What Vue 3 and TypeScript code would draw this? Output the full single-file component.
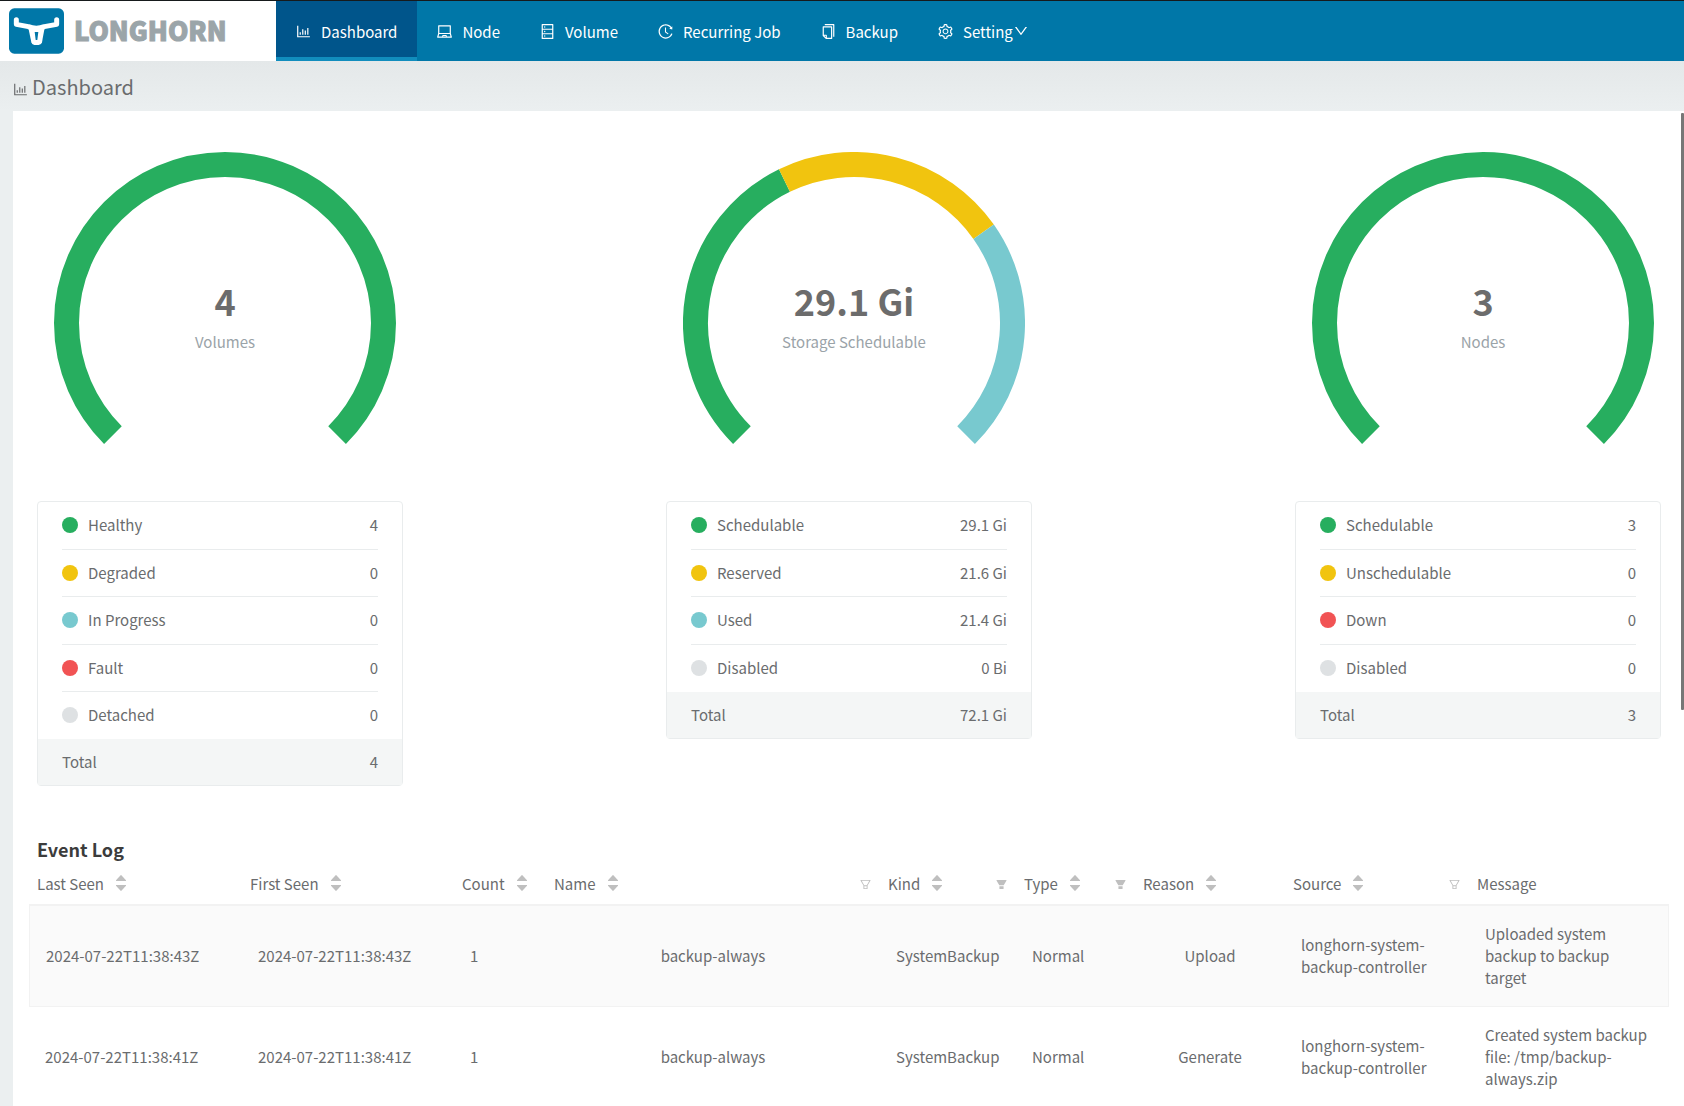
<script setup lang="ts">
interface Slice {
  label: string
  color: string
  value: number
  text: string
}
interface Summary {
  name: string
  headline: string
  total: string
  slices: Slice[]
}
interface Column {
  title: string
  width: number
  sortable: boolean
  filter?: 'outlined' | 'filled'
}

const GREEN = '#27ae5f'
const YELLOW = '#f1c40f'
const TEAL = '#78c9cf'
const RED = '#f15354'
const GREY = '#dee1e3'

const icons = {
  chart:
    'M888 792H200V168c0-4.4-3.6-8-8-8h-56c-4.4 0-8 3.6-8 8v688c0 4.4 3.6 8 8 8h752c4.4 0 8-3.6 8-8v-56c0-4.4-3.6-8-8-8zm-600-80h56c4.4 0 8-3.6 8-8V560c0-4.4-3.6-8-8-8h-56c-4.4 0-8 3.6-8 8v144c0 4.4 3.6 8 8 8zm152 0h56c4.4 0 8-3.6 8-8V384c0-4.4-3.6-8-8-8h-56c-4.4 0-8 3.6-8 8v320c0 4.4 3.6 8 8 8zm152 0h56c4.4 0 8-3.6 8-8V462c0-4.4-3.6-8-8-8h-56c-4.4 0-8 3.6-8 8v242c0 4.4 3.6 8 8 8zm152 0h56c4.4 0 8-3.6 8-8V304c0-4.4-3.6-8-8-8h-56c-4.4 0-8 3.6-8 8v400c0 4.4 3.6 8 8 8z',
  laptop:
    'M956.9 845.1L896.4 632V168c0-17.7-14.3-32-32-32h-704c-17.7 0-32 14.3-32 32v464L67.9 845.1C60.4 866 75.8 888 98 888h828.8c22.2 0 37.6-22 30.1-42.9zM200.4 208h624v395h-624V208zm228.3 608l8.1-37h150.3l8.1 37H428.7zm224 0l-19.1-86.7c-.8-3.7-4.1-6.3-7.8-6.3H398.2c-3.8 0-7 2.6-7.8 6.3L371.3 816H151l42.3-149h638.2l42.3 149H652.7z',
  database:
    'M832 64H192c-17.7 0-32 14.3-32 32v832c0 17.7 14.3 32 32 32h640c17.7 0 32-14.3 32-32V96c0-17.7-14.3-32-32-32zm-600 72h560v208H232V136zm560 480H232V408h560v208zm0 272H232V680h560v208zM304 240a40 40 0 1 0 80 0 40 40 0 1 0-80 0zm0 272a40 40 0 1 0 80 0 40 40 0 1 0-80 0zm0 272a40 40 0 1 0 80 0 40 40 0 1 0-80 0z',
  history:
    'M536.1 273H488c-4.4 0-8 3.6-8 8v275.3c0 2.6 1.2 5 3.3 6.5l165.3 120.7c3.6 2.6 8.6 1.9 11.2-1.7l28.6-39c2.7-3.7 1.9-8.7-1.7-11.2L544.1 528.5V281c0-4.4-3.6-8-8-8zm219.8 75.2l156.8 38.3c5 1.2 9.9-2.6 9.9-7.7l.8-161.5c0-6.7-7.7-10.5-12.9-6.3L752.9 334.1a8 8 0 0 0 3 14.1zm167.7 301.1l-56.7-19.5a8 8 0 0 0-10.1 4.8c-1.9 5.1-3.9 10.1-6 15.1-17.8 42.1-43.3 80-75.9 112.5a353 353 0 0 1-112.5 75.9 352.18 352.18 0 0 1-137.7 27.8c-47.8 0-94.1-9.3-137.7-27.8a353 353 0 0 1-112.5-75.9c-32.5-32.5-58-70.4-75.9-112.5A353.44 353.44 0 0 1 171 512c0-47.8 9.3-94.2 27.8-137.8 17.8-42.1 43.3-80 75.9-112.5a353 353 0 0 1 112.5-75.9C430.6 167.3 477 158 524.8 158s94.1 9.3 137.7 27.8A353 353 0 0 1 775 261.7c10.2 10.3 19.8 21 28.6 32.3l59.8-46.8C784.7 146.6 662.2 81.9 524.6 82 285 82.1 92.6 276.7 95 516.4 97.4 751.9 288.9 942 524.8 942c185.5 0 343.5-117.6 403.7-282.3 1.5-4.2-.7-8.9-4.9-10.4z',
  copy:
    'M832 64H296c-4.4 0-8 3.6-8 8v56c0 4.4 3.6 8 8 8h496v688c0 4.4 3.6 8 8 8h56c4.4 0 8-3.6 8-8V96c0-17.7-14.3-32-32-32zM704 192H192c-17.7 0-32 14.3-32 32v530.7c0 8.5 3.4 16.6 9.4 22.6l173.3 173.3c2.2 2.2 4.7 4 7.4 5.5v1.9h4.2c3.5 1.3 7.2 2 11 2H704c17.7 0 32-14.3 32-32V224c0-17.7-14.3-32-32-32zM350 856.2L263.9 770H350v86.2zM664 888H414V746c0-22.1-17.9-40-40-40H232V264h432v624z',
  setting:
    'M924.8 625.7l-65.5-56c3.1-19 4.7-38.4 4.7-57.8s-1.6-38.8-4.7-57.8l65.5-56a32.03 32.03 0 0 0 9.3-35.2l-.9-2.6a443.74 443.74 0 0 0-79.7-137.9l-1.8-2.1a32.12 32.12 0 0 0-35.1-9.5l-81.3 28.9c-30-24.6-63.5-44-99.7-57.6l-15.7-85a32.05 32.05 0 0 0-25.8-25.7l-2.7-.5c-52.1-9.4-106.9-9.4-159 0l-2.7.5a32.05 32.05 0 0 0-25.8 25.7l-15.8 85.4a351.86 351.86 0 0 0-99 57.4l-81.9-29.1a32 32 0 0 0-35.1 9.5l-1.8 2.1a446.02 446.02 0 0 0-79.7 137.9l-.9 2.6c-4.5 12.5-.8 26.5 9.3 35.2l66.3 56.6c-3.1 18.8-4.6 38-4.6 57.1 0 19.2 1.5 38.4 4.6 57.1L99 625.5a32.03 32.03 0 0 0-9.3 35.2l.9 2.6c18.1 50.4 44.9 96.9 79.7 137.9l1.8 2.1a32.12 32.12 0 0 0 35.1 9.5l81.9-29.1c29.8 24.5 63.1 43.9 99 57.4l15.8 85.4a32.05 32.05 0 0 0 25.8 25.7l2.7.5a449.4 449.4 0 0 0 159 0l2.7-.5a32.05 32.05 0 0 0 25.8-25.7l15.7-85a350 350 0 0 0 99.7-57.6l81.3 28.9a32 32 0 0 0 35.1-9.5l1.8-2.1c34.8-41.1 61.6-87.5 79.7-137.9l.9-2.6c4.5-12.3.8-26.3-9.3-35zM788.3 465.9c2.5 15.1 3.8 30.6 3.8 46.1s-1.3 31-3.8 46.1l-6.6 40.1 74.7 63.9a370.03 370.03 0 0 1-42.6 73.6L721 702.8l-31.4 25.8c-23.9 19.6-50.5 35-79.3 45.8l-38.1 14.3-17.9 97a377.5 377.5 0 0 1-85 0l-17.9-97.2-37.8-14.5c-28.5-10.8-55-26.2-78.7-45.7l-31.4-25.9-93.4 33.2c-17-22.9-31.2-47.6-42.6-73.6l75.5-64.5-6.5-40c-2.4-14.9-3.7-30.3-3.7-45.5 0-15.3 1.2-30.6 3.7-45.5l6.5-40-75.5-64.5c11.3-26.1 25.6-50.7 42.6-73.6l93.4 33.2 31.4-25.9c23.7-19.5 50.2-34.9 78.7-45.7l37.9-14.3 17.9-97.2c28.1-3.2 56.8-3.2 85 0l17.9 97 38.1 14.3c28.7 10.8 55.4 26.2 79.3 45.8l31.4 25.8 92.8-32.9c17 22.9 31.2 47.6 42.6 73.6L781.8 426l6.5 39.9zM512 326c-97.2 0-176 78.8-176 176s78.8 176 176 176 176-78.8 176-176-78.8-176-176-176zm79.2 255.2A111.6 111.6 0 0 1 512 614c-29.9 0-58-11.7-79.2-32.8A111.6 111.6 0 0 1 400 502c0-29.9 11.7-58 32.8-79.2C454 401.6 482.1 390 512 390c29.9 0 58 11.6 79.2 32.8A111.6 111.6 0 0 1 624 502c0 29.9-11.7 58-32.8 79.2z',
  down:
    'M884 256h-75c-5.1 0-9.9 2.5-12.9 6.6L512 654.2 227.9 262.6c-3-4.1-7.8-6.6-12.9-6.6h-75c-6.5 0-10.3 7.4-6.5 12.7l352.6 486.1c12.8 17.6 39 17.6 51.7 0l352.6-486.1c3.9-5.3.1-12.7-6.4-12.7z',
}

const filterPaths = {
  outlined:
    'M880.1 154H143.9c-24.5 0-39.8 26.7-27.5 48L349 597.4V838c0 17.7 14.2 32 31.8 32h262.4c17.6 0 31.8-14.3 31.8-32V597.4L907.7 202c12.2-21.3-3.1-48-27.6-48zM603.4 798H420.6V642h182.9v156zm9.6-236.6l-9.5 16.6h-183l-9.5-16.6L212.7 226h598.6L613 561.4z',
  filled:
    'M349 838c0 17.7 14.2 32 31.8 32h262.4c17.6 0 31.8-14.3 31.8-32V642H349v196zm531.1-684H143.9c-24.5 0-39.8 26.7-27.5 48l221.3 376h348.8l221.3-376c12.1-21.3-3.2-48-27.7-48z',
}

const nav = [
  { label: 'Dashboard', icon: icons.chart, active: true },
  { label: 'Node', icon: icons.laptop },
  { label: 'Volume', icon: icons.database },
  { label: 'Recurring Job', icon: icons.history },
  { label: 'Backup', icon: icons.copy },
  { label: 'Setting', icon: icons.setting, menu: true },
]

const summaries: Summary[] = [
  {
    name: 'Volumes',
    headline: '4',
    total: '4',
    slices: [
      { label: 'Healthy', color: GREEN, value: 4, text: '4' },
      { label: 'Degraded', color: YELLOW, value: 0, text: '0' },
      { label: 'In Progress', color: TEAL, value: 0, text: '0' },
      { label: 'Fault', color: RED, value: 0, text: '0' },
      { label: 'Detached', color: GREY, value: 0, text: '0' },
    ],
  },
  {
    name: 'Storage Schedulable',
    headline: '29.1 Gi',
    total: '72.1 Gi',
    slices: [
      { label: 'Schedulable', color: GREEN, value: 29.1, text: '29.1 Gi' },
      { label: 'Reserved', color: YELLOW, value: 21.6, text: '21.6 Gi' },
      { label: 'Used', color: TEAL, value: 21.4, text: '21.4 Gi' },
      { label: 'Disabled', color: GREY, value: 0, text: '0 Bi' },
    ],
  },
  {
    name: 'Nodes',
    headline: '3',
    total: '3',
    slices: [
      { label: 'Schedulable', color: GREEN, value: 3, text: '3' },
      { label: 'Unschedulable', color: YELLOW, value: 0, text: '0' },
      { label: 'Down', color: RED, value: 0, text: '0' },
      { label: 'Disabled', color: GREY, value: 0, text: '0' },
    ],
  },
]

const columns: Column[] = [
  { title: 'Last Seen', width: 213, sortable: true },
  { title: 'First Seen', width: 212, sortable: true },
  { title: 'Count', width: 92, sortable: true },
  { title: 'Name', width: 334, sortable: true, filter: 'outlined' },
  { title: 'Kind', width: 136, sortable: true, filter: 'filled' },
  { title: 'Type', width: 119, sortable: true, filter: 'filled' },
  { title: 'Reason', width: 150, sortable: true },
  { title: 'Source', width: 184, sortable: true, filter: 'outlined' },
  { title: 'Message', width: 200, sortable: false },
]
const tableWidth = columns.reduce((sum, c) => sum + c.width, 0)

const events = [
  {
    time: '2024-07-22T11:38:43Z',
    reason: 'Upload',
    message: 'Uploaded system backup to backup target',
  },
  {
    time: '2024-07-22T11:38:41Z',
    reason: 'Generate',
    message: 'Created system backup file: /tmp/backup-always.zip',
  },
]

/** Converts the slices to arcs of a 270 degree ring, starting at the lower left. */
function arcs(slices: Slice[]) {
  const radius = 158.5
  const sum = slices.reduce((total, s) => total + s.value, 0)
  const point = (turn: number) => {
    const angle = ((turn * 270 - 225) * Math.PI) / 180
    return `${(171 + radius * Math.cos(angle)).toFixed(2)} ${(171 + radius * Math.sin(angle)).toFixed(2)}`
  }
  let from = 0
  return slices
    .filter((s) => s.value > 0)
    .map((s) => {
      const to = from + s.value / sum
      const large = (to - from) * 270 > 180 ? 1 : 0
      const d = `M${point(from)} A${radius} ${radius} 0 ${large} 1 ${point(to)}`
      from = to
      return { d, color: s.color }
    })
}
</script>

<template>
  <div class="app">
    <header class="topbar">
      <a class="brand" href="#" aria-label="Longhorn home">
        <svg class="brand-mark" viewBox="0 0 165 136" aria-hidden="true">
          <rect width="165" height="136" rx="16" fill="#0077a8" />
          <path
            d="M22 34V48L58 55Q70 60 82 60Q94 60 106 55L143 48V34"
            fill="none"
            stroke="#fff"
            stroke-width="15"
            stroke-linecap="round"
            stroke-linejoin="round"
          />
          <path d="M58 58H107L99 102Q97 110 89 110H76Q69 110 67 102Z" fill="#fff" />
          <path d="M77 71H88L85 95H80Z" fill="#0077a8" />
        </svg>
        <span class="brand-name">LONGHORN</span>
      </a>
      <nav class="nav">
        <a v-for="item in nav" :key="item.label" href="#" class="nav-item" :class="{ active: item.active }">
          <svg class="icon" viewBox="0 0 1024 1024" aria-hidden="true"><path :d="item.icon" /></svg>
          <span class="nav-label">{{ item.label }}</span>
          <svg v-if="item.menu" class="caret" viewBox="0 0 1024 1024" aria-hidden="true"><path :d="icons.down" /></svg>
        </a>
      </nav>
    </header>

    <div class="page-title">
      <svg class="icon" viewBox="0 0 1024 1024" aria-hidden="true"><path :d="icons.chart" /></svg>
      <h1>Dashboard</h1>
    </div>

    <main class="content">
      <div class="scroll-thumb"></div>
      <section class="summaries">
        <article v-for="s in summaries" :key="s.name" class="summary">
          <div class="gauge">
            <svg class="ring" viewBox="0 0 342 342" aria-hidden="true">
              <path v-for="a in arcs(s.slices)" :key="a.color" :d="a.d" :stroke="a.color" fill="none" stroke-width="25" />
            </svg>
            <div class="gauge-text">
              <strong>{{ s.headline }}</strong>
              <span>{{ s.name }}</span>
            </div>
          </div>
          <div class="legend">
            <ul>
              <li v-for="slice in s.slices" :key="slice.label">
                <i class="dot" :style="{ background: slice.color }"></i>
                <span class="name">{{ slice.label }}</span>
                <span>{{ slice.text }}</span>
              </li>
            </ul>
            <div class="total"><span>Total</span><span>{{ s.total }}</span></div>
          </div>
        </article>
      </section>

      <section class="events">
        <h2>Event Log</h2>
        <table>
          <colgroup>
            <col v-for="c in columns" :key="c.title" :style="{ width: (c.width / tableWidth) * 100 + '%' }" />
          </colgroup>
          <thead>
            <tr>
              <th v-for="c in columns" :key="c.title" scope="col">
                <div class="head">
                  <button v-if="c.sortable" type="button" class="sort">
                    <span>{{ c.title }}</span>
                    <svg viewBox="0 0 10 16" aria-hidden="true">
                      <path d="M4.4.4Q5-.2 5.6.4L10 5.2V6H0V5.2Z" />
                      <path d="M0 10H10V10.8L5.6 15.6Q5 16.2 4.4 15.6L0 10.8Z" />
                    </svg>
                  </button>
                  <span v-else>{{ c.title }}</span>
                  <button v-if="c.filter" type="button" class="filter" :aria-label="'Filter ' + c.title">
                    <svg viewBox="0 0 1024 1024" aria-hidden="true"><path :d="filterPaths[c.filter]" /></svg>
                  </button>
                </div>
              </th>
            </tr>
          </thead>
          <tbody>
            <tr v-for="(e, i) in events" :key="e.time" :class="{ hovered: i === 0 }">
              <td>{{ e.time }}</td>
              <td>{{ e.time }}</td>
              <td>1</td>
              <td class="center">backup-always</td>
              <td>SystemBackup</td>
              <td>Normal</td>
              <td class="center">{{ e.reason }}</td>
              <td>longhorn-system-backup-controller</td>
              <td>{{ e.message }}</td>
            </tr>
          </tbody>
        </table>
      </section>
    </main>
  </div>
</template>

<style>
body {
  margin: 0;
}
</style>

<style scoped>
.app {
  box-sizing: border-box;
  display: flex;
  flex-direction: column;
  height: 100vh;
  overflow: hidden;
  border-top: 1px solid #161a1c;
  background: #ebeff0;
  color: #6a6c6e;
  font-family: 'Noto Sans CJK SC', 'Noto Sans', sans-serif;
  font-size: 15px;
  line-height: 22px;
}
.app *,
.app *::before {
  box-sizing: border-box;
}
a {
  color: inherit;
  text-decoration: none;
}
button {
  padding: 0;
  border: 0;
  background: none;
  color: inherit;
  font: inherit;
  cursor: pointer;
}
svg {
  display: block;
  flex: none;
  fill: currentColor;
}
.topbar {
  display: flex;
  flex: none;
  height: 60px;
  background: #0077a8;
}
.brand {
  display: flex;
  align-items: center;
  flex: none;
  gap: 10px;
  width: 276px;
  padding-left: 9px;
  background: #fff;
}
.brand-mark {
  width: 55px;
  height: 46px;
}
.brand-name {
  padding-bottom: 2px;
  color: #9ba5a9;
  font-size: 26px;
  font-weight: 900;
  line-height: 32px;
  -webkit-text-stroke: 1px #9ba5a9;
}
.nav {
  display: flex;
  color: #fff;
}
.nav-item {
  display: flex;
  align-items: center;
  padding: 0 20px 0 19px;
}
.nav-item .icon {
  margin-right: 9px;
}
.nav-label {
  padding-top: 2px;
}
.nav-item.active {
  background: #00558b;
  box-shadow: inset 0 -4px #118dbd;
}
.icon {
  width: 17px;
  height: 17px;
}
.caret {
  width: 16px;
  height: 16px;
}
.page-title {
  display: flex;
  align-items: center;
  flex: none;
  gap: 3px;
  height: 50px;
  padding: 2px 0 0 12px;
  background: linear-gradient(#e4e8e9, #ebeff0);
}
.page-title .icon {
  margin-top: 4px;
}
.page-title h1 {
  margin: 0;
  font-size: 20px;
  font-weight: 400;
  line-height: 30px;
}
.content {
  position: relative;
  flex: 1;
  min-height: 0;
  margin-left: 13px;
  padding: 41px 15px 0 16px;
  overflow: hidden;
  background: #fff;
}
.scroll-thumb {
  position: absolute;
  top: 2px;
  right: 0;
  width: 3px;
  height: 60%;
  border-radius: 1px;
  background: #777;
}
.summaries {
  display: flex;
  justify-content: space-between;
  padding: 0 8px;
}
.summary {
  width: 366px;
}
.gauge {
  position: relative;
  height: 349px;
  padding-left: 17px;
}
.ring {
  width: 342px;
  height: 342px;
}
.gauge-text {
  position: absolute;
  top: 125px;
  left: 17px;
  display: flex;
  flex-direction: column;
  align-items: center;
  gap: 8px;
  width: 342px;
}
.gauge-text strong {
  color: #6c6c6c;
  font-size: 36px;
  line-height: 46px;
}
.gauge-text span {
  color: #9aa3a8;
}
.legend {
  border: 1px solid #e9eced;
  border-radius: 4px;
}
.legend ul {
  margin: 0;
  padding: 0 24px;
  list-style: none;
}
.legend li {
  display: flex;
  align-items: center;
  height: 48px;
  padding-bottom: 1px;
  border-bottom: 1px solid #e9eced;
}
.legend li:nth-child(even) {
  height: 47px;
}
.legend li:last-child {
  height: 47px;
  border-bottom: 0;
}
.dot {
  width: 16px;
  height: 16px;
  margin-right: 10px;
  border-radius: 50%;
}
.legend .name {
  flex: 1;
}
.total {
  display: flex;
  align-items: center;
  justify-content: space-between;
  height: 46px;
  padding: 0 24px;
  background: #f4f6f6;
}
.events {
  padding-top: 49px;
}
.events h2 {
  margin: 0;
  padding-left: 8px;
  color: #3c3c3c;
  font-size: 18px;
  font-weight: 700;
  line-height: 28px;
}
table {
  width: 100%;
  border-spacing: 0;
  table-layout: fixed;
}
th {
  padding: 10px 8px 9px;
  border-bottom: 2px solid #f2f2f2;
  font-weight: 400;
  text-align: left;
}
.head {
  display: flex;
  align-items: center;
  justify-content: space-between;
}
.sort {
  display: flex;
  align-items: center;
  gap: 12px;
}
.sort svg {
  width: 10px;
  height: 16px;
  margin-bottom: 2px;
  color: #bfbfbf;
}
.filter {
  color: #bfbfbf;
}
.filter svg {
  width: 13px;
  height: 13px;
}
td {
  padding: 17px 16px;
  border-bottom: 1px solid #f2f2f2;
}
.hovered td {
  background: #fafafa;
}
.hovered td:first-child {
  border-left: 1px solid #f2f2f2;
}
.hovered td:last-child {
  border-right: 1px solid #f2f2f2;
}
.center {
  text-align: center;
}
</style>
